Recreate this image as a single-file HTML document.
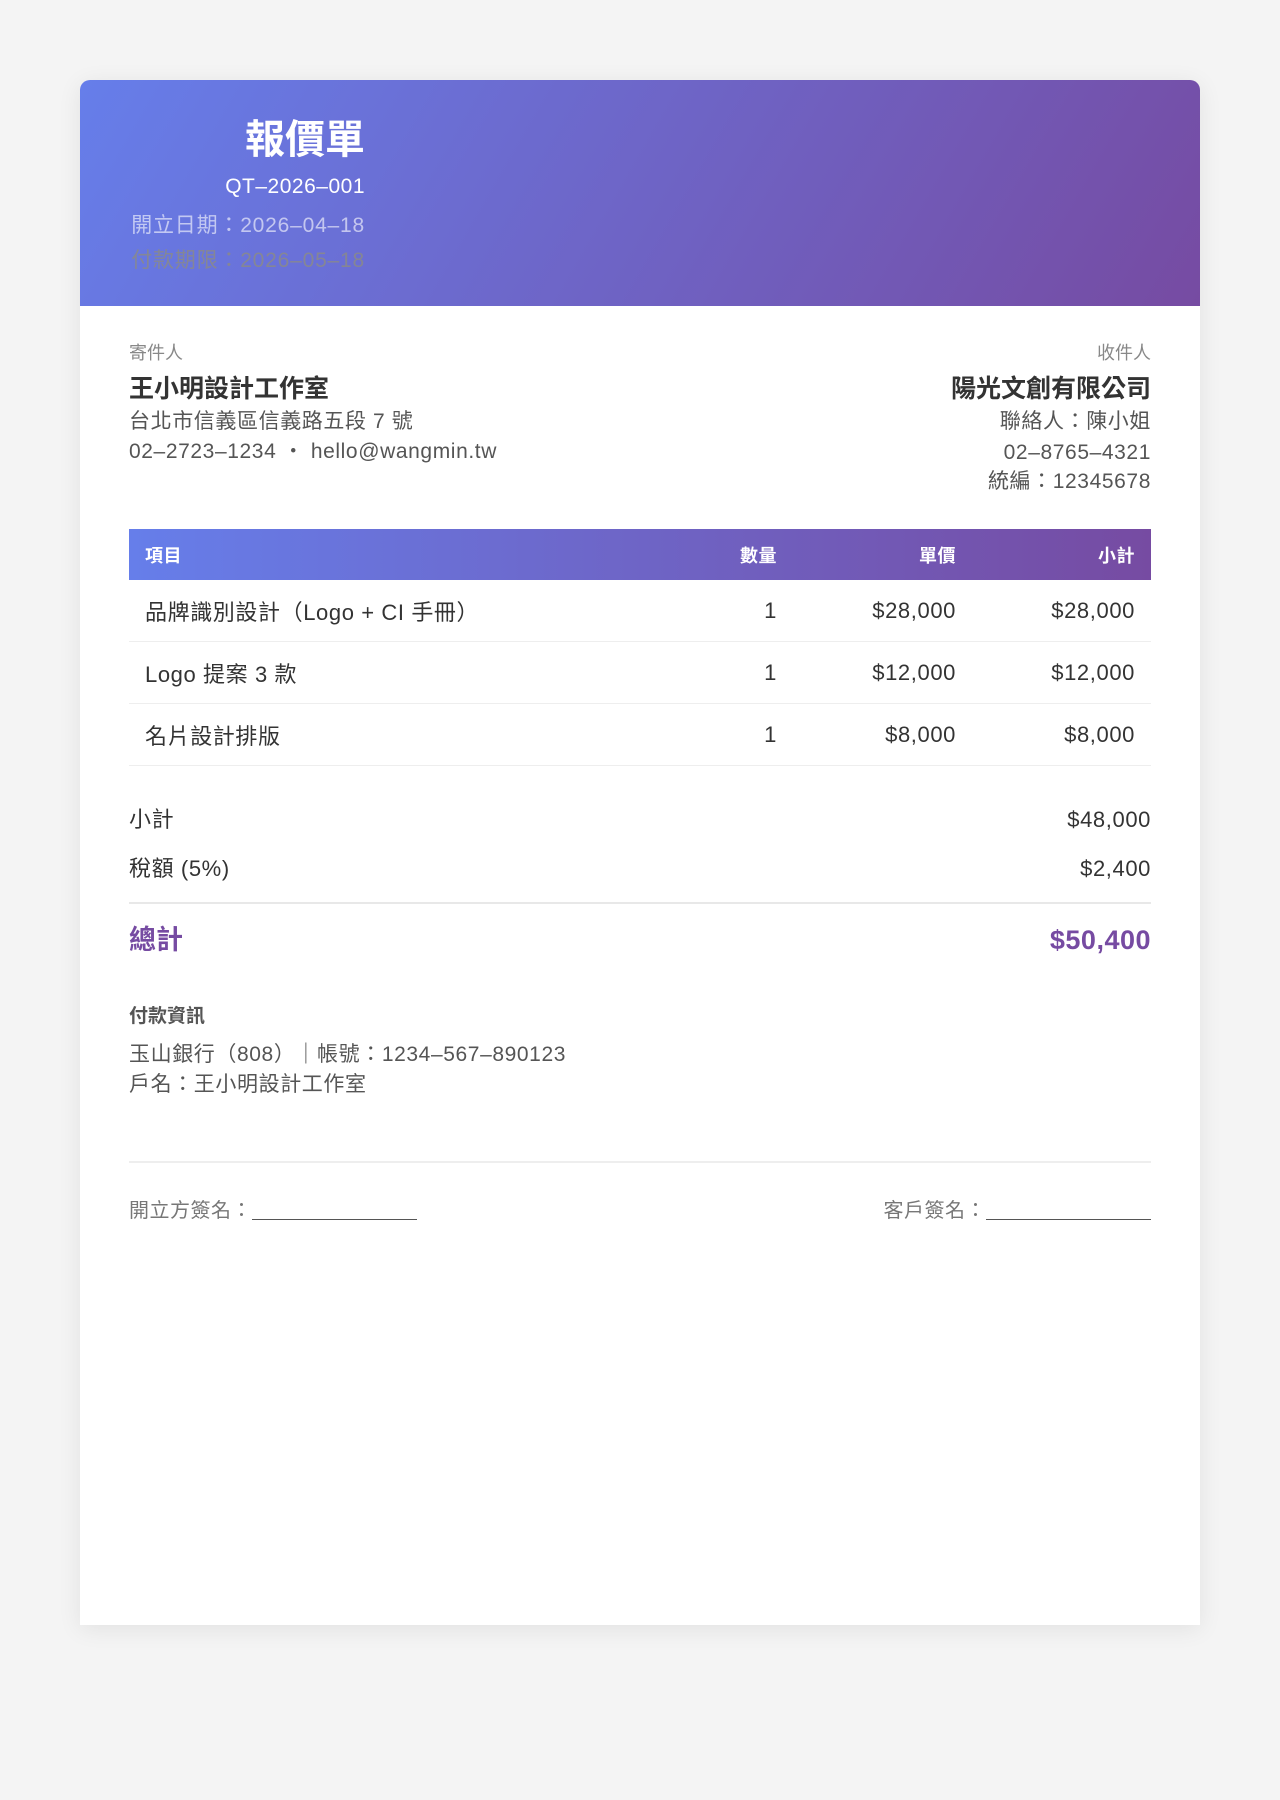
<!DOCTYPE html>
<html><head><meta charset="utf-8"><style>
*{margin:0;padding:0;box-sizing:border-box}
body{width:1280px;height:1800px;background:#f4f4f4;font-family:"Liberation Sans","Noto Sans CJK TC",sans-serif;position:relative;overflow:hidden}
.card{position:absolute;left:80px;top:80px;width:1120px;height:1545px;background:#fff;border-radius:10px 10px 0 0;box-shadow:0 4px 24px rgba(0,0,0,.08);overflow:hidden}
.hd{position:absolute;left:0;top:0;width:1120px;height:226px;background:linear-gradient(120deg,#667eea,#764ba2)}
.ab{position:absolute;white-space:nowrap;line-height:30px}
.r{text-align:right}
.tbl{position:absolute;left:49px;top:449px;width:1022px}
.th{height:51px;background:linear-gradient(90deg,#667eea,#764ba2);position:relative;color:#fff;font-weight:bold;font-size:18px;letter-spacing:.5px}
.row{height:62px;border-bottom:1px solid #eee;position:relative;font-size:22px;color:#333;letter-spacing:.6px}
.c{position:absolute;top:50%;transform:translateY(-50%);white-space:nowrap}
.t{font-size:21px;color:#555;letter-spacing:.6px}
</style></head><body>
<div class="card">
<div class="hd">
<div class="ab r" style="right:835px;top:37px;font-size:40px;font-weight:bold;color:#fff;line-height:46px">報價單</div>
<div class="ab r" style="right:835px;top:92px;font-size:21px;color:#fff;letter-spacing:.5px">QT–2026–001</div>
<div class="ab r" style="right:835px;top:131px;font-size:21px;color:rgba(255,255,255,.6);letter-spacing:.8px">開立日期：2026–04–18</div>
<div class="ab r" style="right:835px;top:166px;font-size:21px;color:#8a8a8a;opacity:.85;letter-spacing:.8px">付款期限：2026–05–18</div>
</div>
<div class="ab" style="left:49px;top:258px;font-size:18px;color:#888">寄件人</div>
<div class="ab" style="left:49px;top:294px;font-size:25px;font-weight:bold;color:#333">王小明設計工作室</div>
<div class="ab t" style="left:49px;top:327px">台北市信義區信義路五段 7 號</div>
<div class="ab t" style="left:49px;top:357px">02–2723–1234 ・ hello@wangmin.tw</div>
<div class="ab r" style="right:49px;top:258px;font-size:18px;color:#888">收件人</div>
<div class="ab r" style="right:49px;top:294px;font-size:25px;font-weight:bold;color:#333">陽光文創有限公司</div>
<div class="ab r t" style="right:49px;top:327px">聯絡人：陳小姐</div>
<div class="ab r t" style="right:49px;top:358px">02–8765–4321</div>
<div class="ab r t" style="right:49px;top:387px">統編：12345678</div>
<div class="tbl">
<div class="th"><span class="c" style="left:16px">項目</span><span class="c" style="right:374px">數量</span><span class="c" style="right:195px">單價</span><span class="c" style="right:16px">小計</span></div>
<div class="row"><span class="c" style="left:16px">品牌識別設計（Logo + CI 手冊）</span><span class="c" style="right:374px">1</span><span class="c" style="right:195px">$28,000</span><span class="c" style="right:16px">$28,000</span></div>
<div class="row"><span class="c" style="left:16px">Logo 提案 3 款</span><span class="c" style="right:374px">1</span><span class="c" style="right:195px">$12,000</span><span class="c" style="right:16px">$12,000</span></div>
<div class="row"><span class="c" style="left:16px">名片設計排版</span><span class="c" style="right:374px">1</span><span class="c" style="right:195px">$8,000</span><span class="c" style="right:16px">$8,000</span></div>
</div>
<div class="ab" style="left:49px;top:725px;font-size:22px;color:#333;letter-spacing:.6px">小計</div>
<div class="ab r" style="right:49px;top:725px;font-size:22px;color:#333;letter-spacing:.6px">$48,000</div>
<div class="ab" style="left:49px;top:774px;font-size:22px;color:#333;letter-spacing:.6px">稅額 (5%)</div>
<div class="ab r" style="right:49px;top:774px;font-size:22px;color:#333;letter-spacing:.6px">$2,400</div>
<div class="ab" style="left:49px;top:822px;width:1022px;border-top:2px solid #e8e8e8;line-height:0"></div>
<div class="ab" style="left:49px;top:845px;font-size:27px;font-weight:bold;color:#764ba2">總計</div>
<div class="ab r" style="right:49px;top:845px;font-size:27px;font-weight:bold;color:#764ba2;letter-spacing:.5px">$50,400</div>
<div class="ab" style="left:49px;top:922px;font-size:19px;font-weight:bold;color:#555">付款資訊</div>
<div class="ab t" style="left:49px;top:960px">玉山銀行（808）｜帳號：1234–567–890123</div>
<div class="ab t" style="left:49px;top:990px">戶名：王小明設計工作室</div>
<div class="ab" style="left:49px;top:1081px;width:1022px;border-top:2px solid #eee;line-height:0"></div>
<div class="ab" style="left:49px;top:1116px;font-size:20px;color:#777;letter-spacing:.5px">開立方簽名：<span style="display:inline-block;width:165px;border-bottom:1px solid #555;vertical-align:-3px"></span></div>
<div class="ab r" style="right:49px;top:1116px;font-size:20px;color:#777;letter-spacing:.5px">客戶簽名：<span style="display:inline-block;width:165px;border-bottom:1px solid #555;vertical-align:-3px"></span></div>
</div>
</body></html>
